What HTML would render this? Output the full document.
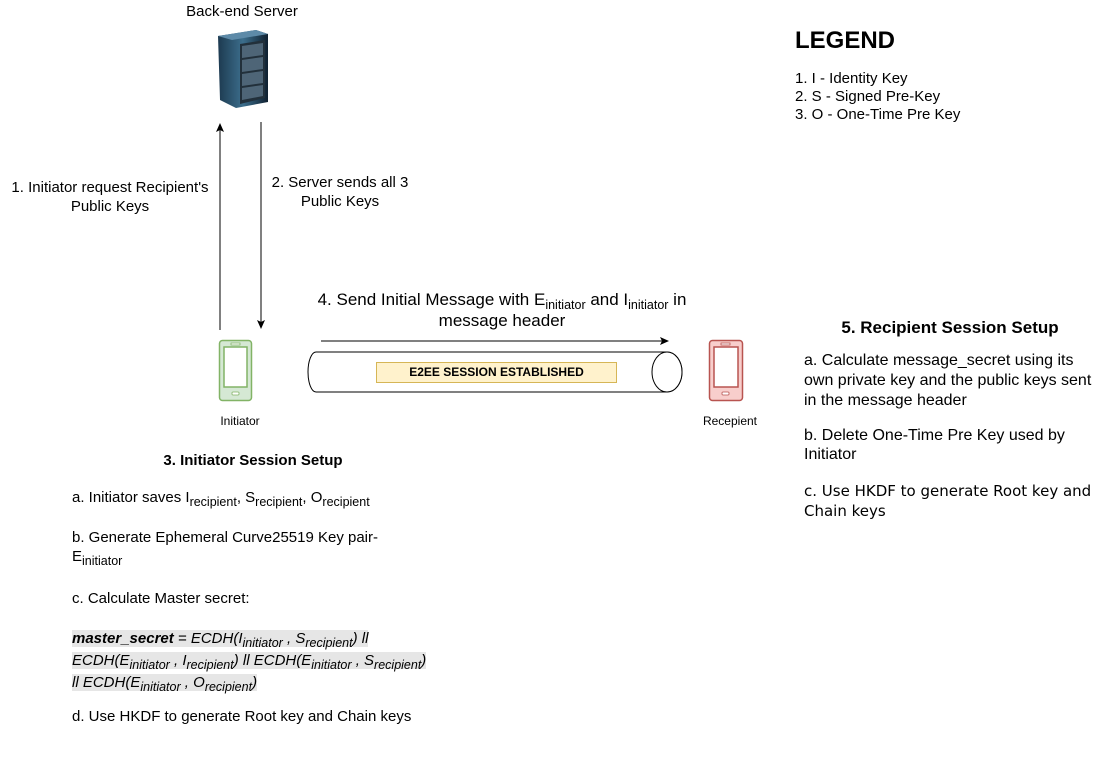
<!DOCTYPE html>
<html><head><meta charset="utf-8"><style>
body{margin:0;width:1101px;height:779px;background:#fff;position:relative;overflow:hidden;font-family:"Liberation Sans",Arial,sans-serif;color:#000}
.t{position:absolute;font-size:15px;line-height:19px;white-space:nowrap}
.c{text-align:center}
sub{font-size:12.5px;vertical-align:-4px;line-height:0}
.m{background:#e6e6e6;font-style:italic}
</style></head><body>
<svg width="1101" height="779" style="position:absolute;left:0;top:0">
<defs>
<marker id="a" markerWidth="10" markerHeight="10" refX="8" refY="5" orient="auto" markerUnits="userSpaceOnUse"><path d="M0,1 L9,5 L0,9 L2,5 Z" fill="#000"/></marker>
<linearGradient id="sg" x1="0" x2="1"><stop offset="0" stop-color="#1d3a50"/><stop offset="0.5" stop-color="#3c6e8c"/><stop offset="1" stop-color="#0f2030"/></linearGradient>
</defs>
<path d="M218,36 L256,30 L268,34 L268,102 L236,108 L220,100 Z" fill="url(#sg)"/>
<path d="M218,36 L256,30 L268,34 L232,40 Z" fill="#5d8aa8"/>
<path d="M240,44 L265,40 L265,98 L240,104 Z" fill="#22303b"/>
<g fill="#5a7386" opacity="0.8">
<path d="M242,46 L263,43 L263,55 L242,58 Z"/><path d="M242,60 L263,57 L263,69 L242,72 Z"/><path d="M242,74 L263,71 L263,83 L242,86 Z"/><path d="M242,88 L263,85 L263,96 L242,100 Z"/>
</g>
<line x1="220" y1="330" x2="220" y2="124" stroke="#000" marker-end="url(#a)"/>
<line x1="261" y1="122" x2="261" y2="328" stroke="#000" marker-end="url(#a)"/>
<line x1="321" y1="341" x2="668" y2="341" stroke="#000" marker-end="url(#a)"/>
<path d="M316,352 L667,352 A15,20 0 0 1 667,392 L316,392 A8,20 0 0 1 316,352 Z" fill="#fff" stroke="#000"/>
<ellipse cx="667" cy="372" rx="15" ry="20" fill="#fff" stroke="#000"/>
<rect x="376.5" y="362.5" width="240" height="20" fill="#fff2cc" stroke="#d6b656"/>
<g fill="#fff" stroke="#82b366" stroke-width="1.5">
<rect x="219.5" y="340.5" width="32" height="60" rx="3" fill="#d5e8d4"/>
<rect x="224" y="347" width="23" height="40" fill="#fff"/>
<rect x="231" y="343" width="9" height="2" fill="#fff" stroke-width="0.8"/>
<rect x="232" y="392" width="7" height="3" rx="1" fill="#fff" stroke-width="0.8"/>
</g>
<g fill="#fff" stroke="#b85450" stroke-width="1.5">
<rect x="709.5" y="340.5" width="33" height="60" rx="3" fill="#f8cecc"/>
<rect x="714" y="347" width="24" height="40" fill="#fff"/>
<rect x="721" y="343" width="9" height="2" fill="#fff" stroke-width="0.8"/>
<rect x="722" y="392" width="7" height="3" rx="1" fill="#fff" stroke-width="0.8"/>
</g>
</svg>
<div class="t c" style="left:162px;top:2px;width:160px">Back-end Server</div>
<div class="t c" style="left:0;top:178px;width:220px;line-height:19px">1. Initiator request Recipient's<br>Public Keys</div>
<div class="t c" style="left:255px;top:173px;width:170px;line-height:19px">2. Server sends all 3<br>Public Keys</div>
<div class="t" style="left:795px;top:27px;font-size:24px;line-height:28px;font-weight:bold">LEGEND</div>
<div class="t" style="left:795px;top:70px;line-height:18px">1. I - Identity Key<br>2. S - Signed Pre-Key<br>3. O - One-Time Pre Key</div>
<div class="t c" style="left:287px;top:289px;width:430px;font-size:17px;line-height:21px">4. Send Initial Message with E<sub>initiator</sub> and I<sub>initiator</sub> in<br>message header</div>
<div class="t c" style="left:376px;top:364px;width:241px;font-size:12px;font-weight:bold;line-height:16px">E2EE SESSION ESTABLISHED</div>
<div class="t c" style="left:195px;top:412px;width:90px;font-size:12px">Initiator</div>
<div class="t c" style="left:685px;top:412px;width:90px;font-size:12px">Recepient</div>
<div class="t c" style="left:120px;top:451px;width:266px;font-weight:bold">3. Initiator Session Setup</div>
<div class="t" style="left:72px;top:488px">a. Initiator saves I<sub>recipient</sub>, S<sub>recipient</sub>, O<sub>recipient</sub></div>
<div class="t" style="left:72px;top:528px">b. Generate Ephemeral Curve25519 Key pair-<br>E<sub>initiator</sub></div>
<div class="t" style="left:72px;top:589px">c. Calculate Master secret:</div>
<div class="t" style="left:72px;top:628px;line-height:22px"><span class="m"><b>master_secret</b> = ECDH(I<sub>initiator</sub> , S<sub>recipient</sub>) ll </span><br><span class="m">ECDH(E<sub>initiator</sub> , I<sub>recipient</sub>) ll ECDH(E<sub>initiator</sub> , S<sub>recipient</sub>)</span><br><span class="m">ll ECDH(E<sub>initiator</sub> , O<sub>recipient</sub>)</span></div>
<div class="t" style="left:72px;top:707px">d. Use HKDF to generate Root key and Chain keys</div>
<div class="t c" style="left:810px;top:317px;width:280px;font-size:17px;line-height:21px;font-weight:bold">5. Recipient Session Setup</div>
<div class="t" style="left:804px;top:351px;font-size:16px;line-height:20px">a. Calculate message_secret using its<br>own private key and the public keys sent<br>in the message header</div>
<div class="t" style="left:804px;top:426px;font-size:16px;line-height:19px">b. Delete One-Time Pre Key used by<br>Initiator</div>
<div class="t" style="left:804px;top:481px;font-family:'DejaVu Sans',sans-serif;font-size:15px;line-height:20px">c. Use HKDF to generate Root key and<br>Chain keys</div>
</body></html>
